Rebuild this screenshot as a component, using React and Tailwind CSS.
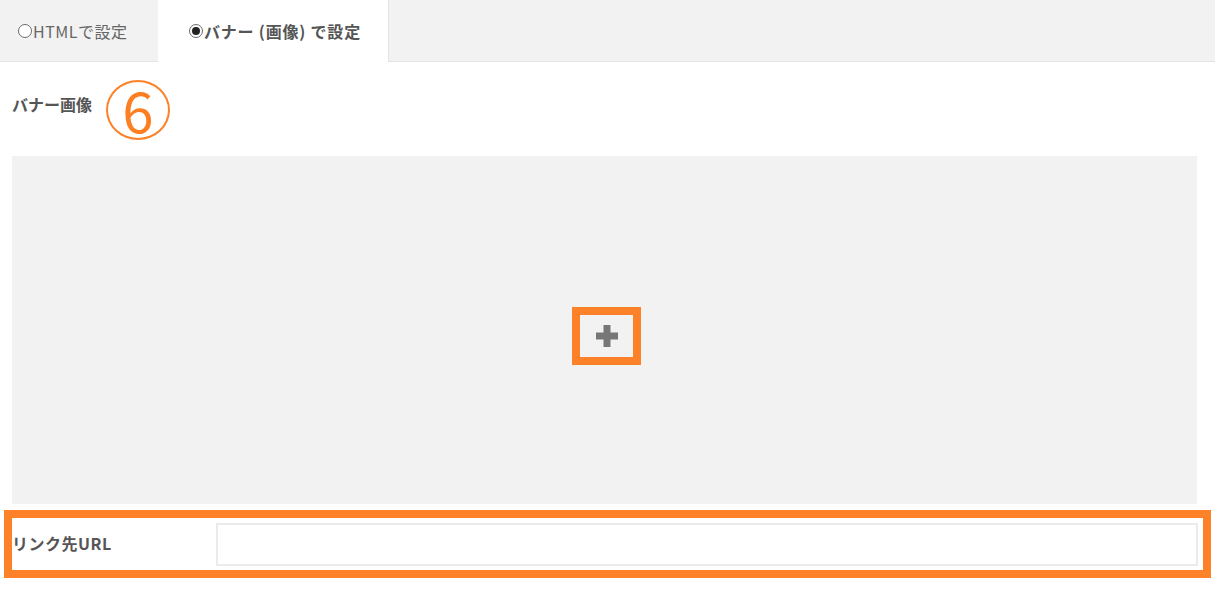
import React from "react";

function Radio({checked}) {
    return (
        <span className="inline-flex w-[14px] h-[14px] rounded-full border-[1.5px] border-[#6b6b6b] bg-white items-center justify-center mr-[1px] mb-[1px]">
            {checked && <span className="w-[8px] h-[8px] rounded-full bg-[#222]"/>}
        </span>
    );
}

export default function App() {
    return (
        <div className="w-[1215px] h-[589px] bg-white text-[#555] overflow-hidden"
             style={{fontFamily: '"Noto Sans CJK JP", "Noto Sans", sans-serif'}}>
            {/* tabs */}
            <div className="flex h-[62px] bg-[#f2f2f2]">
                <div className="w-[158px] flex items-center pl-[18px] pt-[1px] border-b border-[#e3e3e3] text-[16px] tracking-[0.5px] text-[#666]">
                    <Radio/>
                    <span>HTMLで設定</span>
                </div>
                <div className="w-[231px] flex items-center pl-[31px] bg-white border-r border-[#e3e3e3] text-[16px] tracking-[0.8px] font-bold text-[#555]">
                    <Radio checked/>
                    <span>バナー (画像) で設定</span>
                </div>
                <div className="flex-1 border-b border-[#e3e3e3]"/>
            </div>

            {/* banner image */}
            <div className="flex items-start px-[12px] pt-[18px]">
                <div className="pt-[12px] text-[16px] font-bold">バナー画像</div>
                <div className="ml-[14px] w-[64px] h-[60px] rounded-[50%] border-2 border-[#fd8128] flex items-center justify-center text-[#fd7f22] text-[56px] leading-none pb-[3px]">
                    6
                </div>
            </div>

            <div className="mx-[12px] mt-[16px] w-[1185px] h-[348px] bg-[#f2f2f2] flex items-center justify-center pt-[12px]">
                <button className="ml-[4px] w-[69px] h-[58px] border-[8px] border-[#fd8128] flex items-center justify-center">
                    <svg width="22" height="22" viewBox="0 0 22 22">
                        <rect x="7.5" y="0" width="7" height="22" fill="#777"/>
                        <rect x="0" y="7.5" width="22" height="7" fill="#777"/>
                    </svg>
                </button>
            </div>

            {/* link url */}
            <div className="mx-[4px] mt-[6px] w-[1207px] h-[68px] border-[8px] border-[#fd8128] flex items-center pr-[5px]">
                <div className="w-[204px] text-[16px] tracking-[0.5px] font-bold pb-[2px]">リンク先URL</div>
                <input type="text" className="flex-1 h-[43px] border-2 border-[#ebebeb] bg-white outline-none"/>
            </div>
        </div>
    );
}
